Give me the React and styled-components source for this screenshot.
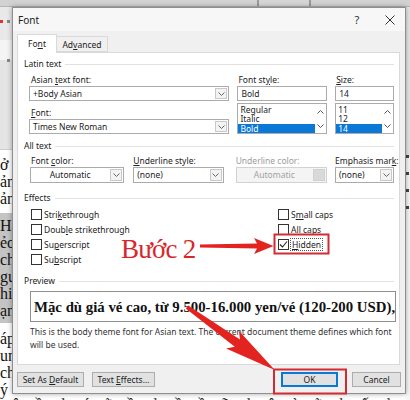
import React from 'react';
import styled, { createGlobalStyle } from 'styled-components';

const Global = createGlobalStyle`
  html, body { margin: 0; padding: 0; background: #fff; }
  body { width: 410px; height: 400px; overflow: hidden; }
  * { box-sizing: border-box; }
`;

const UI = `"Noto Sans", "Open Sans", sans-serif`;
const SERIF = `"Liberation Serif", "Times New Roman", serif`;

const Page = styled.div`
  position: relative;
  width: 410px;
  height: 400px;
  overflow: hidden;
  display: grid;
  grid-template-columns: 12px 394px 4px;
  grid-template-rows: 7px 387px 6px;
  background: #fff;
  font-family: ${UI};
`;

const Ribbon = styled.div`
  grid-column: 1 / 4;
  grid-row: 1;
  background: linear-gradient(90deg, #d2d2d2 0 257px, #9a9a9a 257px 259px, #d6d6d6 259px 309px, #9a9a9a 309px 311px, #d2d2d2 311px);
  border-bottom: 1px solid #b5b5b5;
`;

const LeftDoc = styled.div`
  grid-column: 1;
  grid-row: 2 / 4;
  overflow: hidden;
  display: flex;
  flex-direction: column;
  background: #fff;
`;

const SideRibbon = styled.div`
  height: 143px;
  flex: none;
  background: linear-gradient(180deg, #e9e9e9 0 33px, #f4f4f4 33px 53px, #e4e4e4 53px);
  border-bottom: 1px solid #cfcfcf;
  display: flex;
  flex-direction: column;
  padding: 10px 0 0 0;
`;

const RibbonMark = styled.div`
  width: 3px;
  height: 3px;
  margin-left: ${(p) => p.$x}px;
  margin-top: ${(p) => p.$y}px;
  background: ${(p) => p.$c};
`;

const DocBlock = styled.div`
  margin-top: ${(p) => p.$mt}px;
  padding: ${(p) => (p.$hl ? '4px 0' : '0')};
  background: ${(p) => (p.$hl ? '#c4c4c4' : 'transparent')};
`;

const DocLine = styled.div`
  font-family: ${SERIF};
  font-size: 16px;
  line-height: 17px;
  height: 17px;
  white-space: nowrap;
  color: #111;
`;

const RightDoc = styled.div`
  grid-column: 3;
  grid-row: 2 / 4;
  background: linear-gradient(180deg, #e6e6e6 0 150px, #f7f7f7 150px);
  display: flex;
  flex-direction: column;
  padding-top: 148px;
  gap: 14px;
`;

const RightMark = styled.div`
  height: 3px;
  width: 3px;
  background: #444;
`;

const BottomDoc = styled.div`
  grid-column: 2;
  grid-row: 3;
  overflow: hidden;
  font-family: ${SERIF};
  font-size: 16px;
  line-height: 17px;
  white-space: nowrap;
  color: #222;
  padding-top: 2px;
  letter-spacing: 6px;
`;

/* ---------- dialog ---------- */
const Dialog = styled.div`
  grid-column: 2;
  grid-row: 2;
  display: flex;
  flex-direction: column;
  background: #f0f0f0;
  border: 1px solid #8e8e8e;
  box-shadow: 0 0 5px rgba(0, 0, 0, 0.35);
  color: #1f1f1f;
  font-size: 8.5px;
  line-height: 12px;
  position: relative;
  z-index: 1;
`;

const TitleBar = styled.div`
  height: 23px;
  flex: none;
  display: flex;
  align-items: center;
  padding: 0 5px 0 5px;
  background: #f7f7f7;
  font-size: 10px;
  color: #222;
`;

const TitleBtn = styled.div`
  width: 20px;
  height: 20px;
  display: flex;
  align-items: center;
  justify-content: center;
  margin-left: ${(p) => p.$ml};
  font-size: 11px;
  color: #333;
`;

const TabRow = styled.div`
  height: 22px;
  flex: none;
  display: flex;
  align-items: flex-end;
  padding: 0 5px 0 4px;
  margin-bottom: -1px;
  position: relative;
  z-index: 1;
`;

const Tab = styled.div`
  width: ${(p) => p.$w}px;
  height: ${(p) => (p.$active ? 19 : 16)}px;
  margin-bottom: ${(p) => (p.$active ? 0 : 1)}px;
  display: flex;
  align-items: center;
  justify-content: center;
  background: ${(p) => (p.$active ? '#fff' : '#f0f0f0')};
  border: 1px solid #d9d9d9;
  border-bottom: ${(p) => (p.$active ? 'none' : '1px solid #d9d9d9')};
  border-left: ${(p) => (p.$active ? '1px solid #d9d9d9' : 'none')};
  padding-top: ${(p) => (p.$active ? 0 : 1)}px;
  color: #222;
`;

const Panel = styled.div`
  height: 313px;
  flex: none;
  margin: 0 5px 0 4px;
  background: #fff;
  border: 1px solid #d9d9d9;
  padding: 5px 5px 0 6px;
  display: flex;
  flex-direction: column;
`;

const GroupHeader = styled.div`
  display: flex;
  align-items: center;
  height: 12px;
  gap: 4px;
  margin-top: ${(p) => p.$mt || 0}px;
  color: #222;
  &::after {
    content: '';
    flex: 1;
    height: 1px;
    background: #e2e2e2;
  }
`;

const FieldRow = styled.div`
  display: flex;
  margin-top: ${(p) => p.$mt || 0}px;
  margin-left: ${(p) => p.$ml || 0}px;
`;

const Col = styled.div`
  display: flex;
  flex-direction: column;
  width: ${(p) => p.$w}px;
  margin-left: ${(p) => p.$ml || 0}px;
`;

const Label = styled.div`
  height: 12px;
  line-height: 12px;
  padding-left: ${(p) => (p.$pl === undefined ? 2 : p.$pl)}px;
  margin-top: ${(p) => p.$mt || 0}px;
  color: ${(p) => (p.$disabled ? '#9c9c9c' : '#222')};
  white-space: nowrap;
`;

const Acc = styled.span`
  text-decoration: underline;
  text-underline-offset: 1px;
`;

const Combo = styled.div`
  display: flex;
  height: ${(p) => p.$h || 15}px;
  border: 1px solid ${(p) => (p.$disabled ? '#d2d2d2' : '#ababab')};
  background: ${(p) => (p.$disabled ? '#f4f4f4' : '#fff')};
`;

const ComboText = styled.div`
  flex: 1;
  display: flex;
  align-items: center;
  justify-content: ${(p) => (p.$center ? 'center' : 'flex-start')};
  padding-left: ${(p) => (p.$center ? 0 : 3)}px;
  color: ${(p) => (p.$disabled ? '#a2a2a2' : '#222')};
  white-space: nowrap;
`;

const DropBtn = styled.div`
  width: 12px;
  margin: 1px;
  border: 1px solid ${(p) => (p.$disabled ? '#d0d0d0' : '#c9c9c9')};
  background: ${(p) => (p.$disabled ? '#d9d9d9' : '#f3f3f3')};
  display: flex;
  align-items: center;
  justify-content: center;
`;

const ListBox = styled.div`
  display: flex;
  height: 31px;
  margin-top: 2px;
  border: 1px solid #ababab;
  background: #fff;
`;

const ListItems = styled.div`
  flex: 1;
  padding-top: 0.5px;
`;

const ListItem = styled.div`
  height: 9.5px;
  line-height: 9.5px;
  padding-left: 2px;
  background: ${(p) => (p.$sel ? '#0a78d7' : 'transparent')};
  color: ${(p) => (p.$sel ? '#fff' : '#222')};
`;

const ScrollCol = styled.div`
  width: 11px;
  display: flex;
  flex-direction: column;
  justify-content: space-between;
  align-items: center;
  padding: 6px 0 5px;
`;

const Checks = styled.div`
  display: flex;
  margin-top: 3px;
  margin-left: 7px;
`;

const CheckCol = styled.div`
  display: flex;
  flex-direction: column;
  width: ${(p) => p.$w || 'auto'};
`;

const CheckRow = styled.div`
  display: flex;
  align-items: center;
  height: 15px;
  gap: 2px;
  white-space: nowrap;
  color: #222;
`;

const Box = styled.div`
  width: 11px;
  height: 11px;
  flex: none;
  border: 1px solid #333;
  background: #fff;
  display: flex;
  align-items: center;
  justify-content: center;
`;

const FocusText = styled.span`
  outline: 1px dotted #555;
  outline-offset: 0;
  padding: 0 1px;
  line-height: 11px;
`;

const PreviewBox = styled.div`
  margin: 4px 0 0 6px;
  width: 366px;
  height: 31px;
  border: 1px solid #8f8f8f;
  display: flex;
  align-items: center;
  padding-left: 3px;
  font-family: ${SERIF};
  font-weight: bold;
  font-size: 14.8px;
  color: #111;
  white-space: nowrap;
  overflow: hidden;
`;

const Desc = styled.div`
  margin: 3px 0 0 6px;
  line-height: 13px;
  color: #333;
  white-space: nowrap;
`;

const Footer = styled.div`
  flex: 1;
  display: flex;
  align-items: flex-start;
  padding: 7px 4px 0 4px;
`;

const Button = styled.div`
  width: ${(p) => p.$w}px;
  height: 15px;
  margin-left: ${(p) => p.$ml || '0'};
  display: flex;
  align-items: center;
  justify-content: center;
  background: #e1e1e1;
  border: 1px solid ${(p) => (p.$primary ? '#0a78d7' : '#adadad')};
  box-shadow: ${(p) => (p.$primary ? 'inset 0 0 0 1px #0a78d7' : 'none')};
  color: #222;
  white-space: nowrap;
`;

/* ---------- annotations ---------- */
const Overlay = styled.svg`
  position: absolute;
  left: 0;
  top: 0;
  z-index: 3;
  pointer-events: none;
`;

const StepText = styled.div`
  position: absolute;
  left: 121px;
  top: 236px;
  z-index: 3;
  font-family: ${SERIF};
  font-size: 27px;
  line-height: 27px;
  letter-spacing: -0.8px;
  color: #d8262a;
  white-space: nowrap;
`;

const Chevron = ({ up, color = '#666' }) => (
  <svg width="7" height="4" viewBox="0 0 7 4">
    <path d={up ? 'M0.5 3.5 L3.5 0.5 L6.5 3.5' : 'M0.5 0.5 L3.5 3.5 L6.5 0.5'} fill="none" stroke={color} strokeWidth="1" />
  </svg>
);

const Dropdown = ({ text, center, disabled, h }) => (
  <Combo $h={h} $disabled={disabled}>
    <ComboText $center={center} $disabled={disabled}>{text}</ComboText>
    <DropBtn $disabled={disabled}>{!disabled && <Chevron />}</DropBtn>
  </Combo>
);

const Check = ({ children, checked }) => (
  <CheckRow>
    <Box>
      {checked && (
        <svg width="9" height="9" viewBox="0 0 9 9">
          <path d="M1 4.5 L3.5 7 L8 1.5" fill="none" stroke="#222" strokeWidth="1.1" />
        </svg>
      )}
    </Box>
    <span>{children}</span>
  </CheckRow>
);

const List = ({ items, sel }) => (
  <ListBox>
    <ListItems>
      {items.map((it) => (
        <ListItem key={it} $sel={it === sel}>{it}</ListItem>
      ))}
    </ListItems>
    <ScrollCol>
      <Chevron up color="#555" />
      <Chevron color="#555" />
    </ScrollCol>
  </ListBox>
);

export default function App() {
  return (
    <>
      <Global />
      <Page>
        <Ribbon />
        <LeftDoc>
          <SideRibbon>
            <RibbonMark $x={0} $y={3} $c="#d33" />
            <RibbonMark $x={7} $y={-3} $c="#888" />
            <RibbonMark $x={7} $y={36} $c="#888" />
          </SideRibbon>
          <DocBlock $mt={6}>
            <DocLine>ở ,</DocLine>
            <DocLine>ản</DocLine>
            <DocLine>ản</DocLine>
          </DocBlock>
          <DocBlock $mt={6} $hl>
            <DocLine>Hặ</DocLine>
            <DocLine>ẻo</DocLine>
            <DocLine>ch</DocLine>
            <DocLine>gu</DocLine>
            <DocLine>hiề</DocLine>
            <DocLine>ạn</DocLine>
          </DocBlock>
          <DocBlock $mt={7}>
            <DocLine>áp</DocLine>
            <DocLine>un</DocLine>
            <DocLine>ch</DocLine>
            <DocLine>ý c</DocLine>
          </DocBlock>
        </LeftDoc>

        <Dialog>
          <TitleBar>
            <span>Font</span>
            <TitleBtn $ml="auto"><span>?</span></TitleBtn>
            <TitleBtn $ml="13px">
              <svg width="10" height="10" viewBox="0 0 10 10">
                <path d="M0.5 0.5 L9.5 9.5 M9.5 0.5 L0.5 9.5" stroke="#333" strokeWidth="1" />
              </svg>
            </TitleBtn>
          </TitleBar>
          <TabRow>
            <Tab $active $w={40}><span>Fo<Acc>n</Acc>t</span></Tab>
            <Tab $w={51}><span>Ad<Acc>v</Acc>anced</span></Tab>
          </TabRow>
          <Panel>
            <GroupHeader><span>Latin text</span></GroupHeader>
            <FieldRow $mt={4} $ml={5}>
              <Col $w={201}>
                <Label>Asian <Acc>t</Acc>ext font:</Label>
                <Dropdown text="+Body Asian" />
                <Label $mt={6}><Acc>F</Acc>ont:</Label>
                <Dropdown text="Times New Roman" />
              </Col>
              <Col $w={90} $ml={8}>
                <Label $pl={1}>Font st<Acc>y</Acc>le:</Label>
                <Combo><ComboText>Bold</ComboText></Combo>
                <List items={['Regular', 'Italic', 'Bold']} sel="Bold" />
              </Col>
              <Col $w={59} $ml={8}>
                <Label $pl={1}><Acc>S</Acc>ize:</Label>
                <Combo><ComboText>14</ComboText></Combo>
                <List items={['11', '12', '14']} sel="14" />
              </Col>
            </FieldRow>

            <GroupHeader $mt={6}><span>All text</span></GroupHeader>
            <FieldRow $mt={3} $ml={6}>
              <Col $w={95}>
                <Label $pl={1}>Font <Acc>c</Acc>olor:</Label>
                <Dropdown text="Automatic" center h={16} />
              </Col>
              <Col $w={91} $ml={9}>
                <Label $pl={0}><Acc>U</Acc>nderline style:</Label>
                <Dropdown text="(none)" h={16} />
              </Col>
              <Col $w={92} $ml={12}>
                <Label $pl={0} $disabled>Underline color:</Label>
                <Dropdown text="Automatic" center disabled h={16} />
              </Col>
              <Col $w={59} $ml={8}>
                <Label $pl={0}>Emphasis mar<Acc>k</Acc>:</Label>
                <Dropdown text="(none)" h={16} />
              </Col>
            </FieldRow>

            <GroupHeader $mt={9}><span>Effects</span></GroupHeader>
            <Checks>
              <CheckCol $w="247px">
                <Check>Stri<Acc>k</Acc>ethrough</Check>
                <Check>Doub<Acc>l</Acc>e strikethrough</Check>
                <Check>Su<Acc>p</Acc>erscript</Check>
                <Check>Su<Acc>b</Acc>script</Check>
              </CheckCol>
              <CheckCol>
                <Check>S<Acc>m</Acc>all caps</Check>
                <Check><Acc>A</Acc>ll caps</Check>
                <Check checked><FocusText><Acc>H</Acc>idden</FocusText></Check>
              </CheckCol>
            </Checks>

            <GroupHeader $mt={8}><span>Preview</span></GroupHeader>
            <PreviewBox><span>Mặc dù giá vé cao, từ 9.500-16.000 yen/vé (120-200 USD),</span></PreviewBox>
            <Desc>
              This is the body theme font for Asian text. The current document theme defines which font
              <br />
              will be used.
            </Desc>
          </Panel>
          <Footer>
            <Button $w={67}><span>Set As <Acc>D</Acc>efault</span></Button>
            <Button $w={63} $ml="8px"><span>Text <Acc>E</Acc>ffects...</span></Button>
            <Button $w={57} $ml="auto" $primary><span>OK</span></Button>
            <Button $w={49} $ml="14px"><span>Cancel</span></Button>
          </Footer>
        </Dialog>

        <RightDoc>
          <RightMark />
          <RightMark />
          <RightMark />
          <RightMark />
        </RightDoc>
        <BottomDoc>ĉ ồ ả ó ĩ ồ ở ầ ề ẽ ả ô ờ ĩ ở ế ở ầ ỗ</BottomDoc>

        <StepText>Bước 2</StepText>
        <Overlay width="410" height="400" viewBox="0 0 410 400">
          <polygon
            points="200,244.6 257,243.6 254,238 273.5,246 254,254 257,248.4 200,247.4"
            fill="#e3231f"
          />
          <rect x="274.5" y="234.5" width="54" height="19" fill="none" stroke="#d22b33" strokeWidth="2" />
          <polygon
            points="188.2,305.4 240,339.4 238.9,330.7 274.8,369.9 226.1,348.5 234.8,346.8 185.8,308.6"
            fill="#e3231f"
          />
          <rect x="274" y="369.5" width="72" height="24" fill="none" stroke="#d22b33" strokeWidth="2" />
        </Overlay>
      </Page>
    </>
  );
}
